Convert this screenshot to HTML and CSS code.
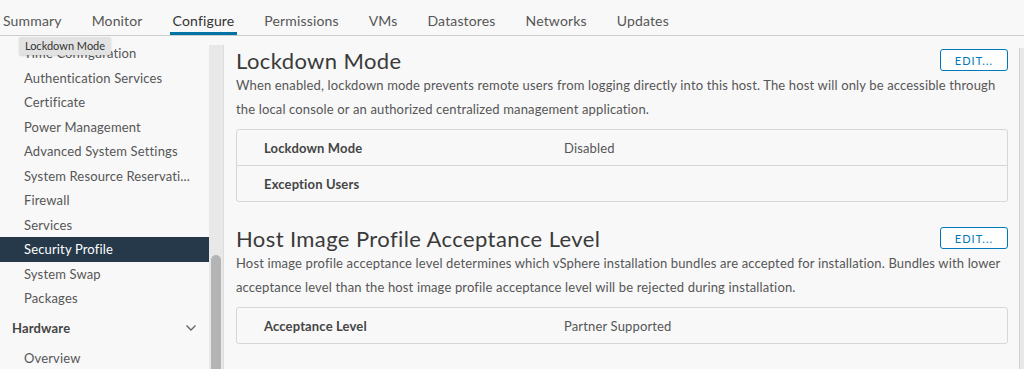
FILE: index.html
```html
<!DOCTYPE html>
<html lang="en">

<head>
  <meta charset="UTF-8">
  <meta name="viewport" content="width=device-width, initial-scale=1.0">
  <title>Security Profile</title>
  <link rel="stylesheet" href="styles.css">
</head>

<body>
  <header class="tabs">
    <a class="tab">Summary</a>
    <a class="tab">Monitor</a>
    <a class="tab active">Configure</a>
    <a class="tab">Permissions</a>
    <a class="tab">VMs</a>
    <a class="tab">Datastores</a>
    <a class="tab">Networks</a>
    <a class="tab">Updates</a>
  </header>

  <div class="layout">
    <!-- Left navigation -->
    <aside class="sidebar">
      <ul class="nav-list">
        <li>Time Configuration</li>
        <li>Authentication Services</li>
        <li>Certificate</li>
        <li>Power Management</li>
        <li>Advanced System Settings</li>
        <li>System Resource Reservati...</li>
        <li>Firewall</li>
        <li>Services</li>
        <li class="selected">Security Profile</li>
        <li>System Swap</li>
        <li>Packages</li>
      </ul>
      <div class="nav-group">
        <span>Hardware</span>
        <svg width="12" height="8" viewBox="0 0 12 8"><path d="M1.5 1.5 L6 6 L10.5 1.5" fill="none" stroke="#666" stroke-width="1.4"/></svg>
      </div>
      <ul class="nav-list">
        <li>Overview</li>
      </ul>
      <div class="tooltip">Lockdown Mode</div>
    </aside>
    <div class="side-scroll"><div class="thumb"></div></div>

    <!-- Main content -->
    <main class="content">
      <section class="block">
        <div class="block-head">
          <h2>Lockdown Mode</h2>
          <button class="edit-btn">EDIT...</button>
        </div>
        <p class="desc">When enabled, lockdown mode prevents remote users from logging directly into this host. The host will only be accessible through the local console or an authorized centralized management application.</p>
        <div class="props">
          <div class="prop-row">
            <span class="prop-label">Lockdown Mode</span>
            <span class="prop-value">Disabled</span>
          </div>
          <div class="prop-row">
            <span class="prop-label">Exception Users</span>
            <span class="prop-value"></span>
          </div>
        </div>
      </section>

      <section class="block">
        <div class="block-head">
          <h2>Host Image Profile Acceptance Level</h2>
          <button class="edit-btn">EDIT...</button>
        </div>
        <p class="desc">Host image profile acceptance level determines which vSphere installation bundles are accepted for installation. Bundles with lower acceptance level than the host image profile acceptance level will be rejected during installation.</p>
        <div class="props">
          <div class="prop-row">
            <span class="prop-label">Acceptance Level</span>
            <span class="prop-value">Partner Supported</span>
          </div>
        </div>
      </section>
    </main>
    <div class="main-scroll"></div>
  </div>
</body>

</html>
```

FILE: styles.css
```css
/* Basic styling */
body {
  margin: 0;
  font-family: Lato, "Open Sans", sans-serif;
  letter-spacing: 0.15px;
  background-color: #f8f8f8;
  color: #565656;
  height: 369px;
  overflow: hidden;
}

.tabs {
  display: flex;
  gap: 24px;
  height: 35px;
  border-bottom: 1px solid #cccccc;
}

.tab {
  padding: 12px 3px 0;
  font-size: 14px;
  line-height: 18px;
  color: #565656;
}

.tab.active {
  color: #333;
  box-shadow: inset 0 -3px 0 #0072a3;
}

.layout {
  display: flex;
  height: 333px;
  overflow: hidden;
}

.sidebar {
  position: relative;
  width: 209px;
  padding-top: 5px;
  font-size: 13px;
}

.nav-list {
  list-style: none;
  margin: 0;
  padding: 0;
}

.nav-list li {
  height: 24.5px;
  line-height: 24.5px;
  padding-left: 24px;
  white-space: nowrap;
}

.nav-list li.selected {
  background-color: #25394a;
  color: #fff;
}

.nav-group {
  display: flex;
  justify-content: space-between;
  align-items: center;
  height: 35px;
  padding: 0 12px;
  font-weight: bold;
  color: #454545;
}

.tooltip {
  position: absolute;
  left: 19px;
  top: 1px;
  width: 92px;
  height: 18px;
  line-height: 18px;
  text-align: center;
  font-size: 11px;
  letter-spacing: 0;
  color: #333;
  background-color: #e2e2e2;
  border-radius: 2px;
  box-shadow: 0 1px 2px rgba(0, 0, 0, 0.15);
}

.side-scroll {
  width: 10px;
  margin-top: 9px;
  padding: 210px 2px 0;
  background-color: #e8e8e8;
  border-right: 1px solid #dddddd;
}

.thumb {
  height: 200px;
  background-color: #b4b4b4;
  border-radius: 5px 5px 0 0;
}

.content {
  flex: 1;
  padding: 10px 11px 0 12px;
}

.block {
  margin-bottom: 22px;
}

.block-head {
  display: flex;
  justify-content: space-between;
  align-items: center;
  height: 28px;
}

.block-head h2 {
  margin: 0;
  font-size: 22px;
  font-weight: normal;
  letter-spacing: 0.4px;
  color: #3a3a3a;
}

.edit-btn {
  width: 68px;
  height: 22px;
  padding: 0;
  font-family: inherit;
  font-size: 11px;
  letter-spacing: 1px;
  color: #0079b8;
  background-color: #fff;
  border: 1px solid #0079b8;
  border-radius: 3px;
}

.desc {
  margin: 0 0 8px;
  font-size: 13px;
  line-height: 23.5px;
}

.props {
  border: 1px solid #d7d7d7;
  border-radius: 3px;
}

.prop-row {
  display: flex;
  height: 35px;
  align-items: center;
  font-size: 13px;
}

.prop-row + .prop-row {
  border-top: 1px solid #d7d7d7;
}

.prop-label {
  width: 300px;
  padding-left: 27px;
  font-weight: bold;
  color: #454545;
}

.main-scroll {
  width: 4px;
  margin-top: 12px;
  background-color: #e8e8e8;
  border-left: 1px solid #d0d0d0;
}
```
